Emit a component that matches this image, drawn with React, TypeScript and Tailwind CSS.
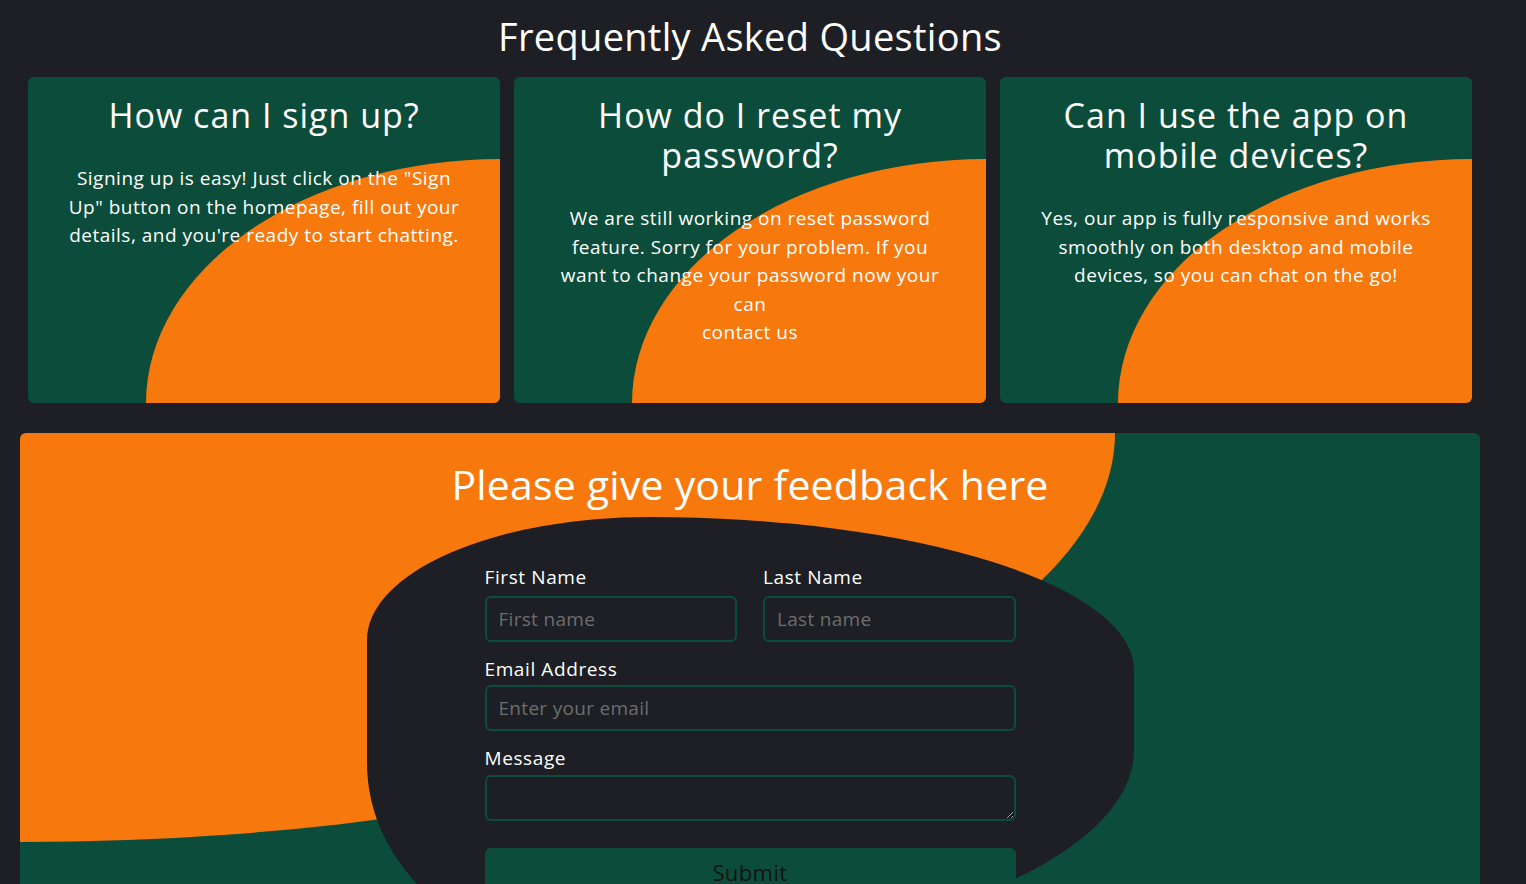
import React from "react";

const faqs = [
  {
    q: "How can I sign up?",
    a: (
      <>
        Signing up is easy! Just click on the "Sign Up" button on the homepage, fill out your details, and
        you're ready to start chatting.
      </>
    ),
  },
  {
    q: "How do I reset my password?",
    a: (
      <>
        We are still working on reset password feature. Sorry for your problem. If you want to change your
        password now your can
        <br />
        contact us
      </>
    ),
  },
  {
    q: "Can I use the app on mobile devices?",
    a: (
      <>
        Yes, our app is fully responsive and works smoothly on both desktop and mobile devices, so you can
        chat on the go!
      </>
    ),
  },
];

function FaqCard({ q, a }: { q: string; a: React.ReactNode }) {
  return (
    <div className="relative h-[326px] overflow-hidden rounded-md bg-[#0b4d3a] px-[36px] pt-[18px] text-center text-white">
      <div className="absolute bottom-0 right-0 h-[244px] w-[354px] rounded-tl-[100%] bg-[#f7780c]" />
      <h3 className="relative text-[34px] font-medium leading-[40px] tracking-[1px]">{q}</h3>
      <p className="relative mt-[29px] text-[19px] leading-[28.5px] tracking-[0.5px]">{a}</p>
    </div>
  );
}

function Label({ children, gap = "mb-[5px]" }: { children: React.ReactNode; gap?: string }) {
  return (
    <label className={`${gap} block text-[19px] font-medium leading-[27px] tracking-[0.6px] text-white`}>
      {children}
    </label>
  );
}

const inputCls =
  "block h-[46px] w-full rounded-md border-2 border-[#0b4d3a] bg-transparent px-[12px] text-[19px] tracking-[0.3px] text-white placeholder:text-[#6d6d6d] outline-none";

export default function App() {
  return (
    <div className="min-h-screen bg-[#1d1f24] font-['Open_Sans',sans-serif]">
      <div className="w-[1500px] pb-[40px]">
        <h1 className="pt-[9px] text-center text-[38px] font-medium leading-[54px] tracking-[0.3px] text-white">
          Frequently Asked Questions
        </h1>

        <div className="mt-[14px] grid grid-cols-3 gap-[14px] px-[28px]">
          {faqs.map((f) => (
            <FaqCard key={f.q} q={f.q} a={f.a} />
          ))}
        </div>

        <section className="relative mx-[20px] mt-[30px] overflow-hidden rounded-t-md bg-[#0b4d3a] pb-[60px]">
          <div className="absolute left-0 top-0 h-[409px] w-[1095px] rounded-br-[100%] bg-[#f7780c]" />
          <h2 className="relative pt-[21px] text-center text-[41px] font-medium leading-[60px] tracking-[0.2px] text-white">
            Please give your feedback here
          </h2>

          <form className="relative mx-auto mt-[3px] w-[767px] rounded-[283px_484px_540px_227px/123px_153px_206px_193px] bg-[#1d1f24] px-[118px] pb-[60px] pt-[47px]">
            <div className="grid grid-cols-2 gap-x-[26px]">
              <div>
                <Label>First Name</Label>
                <input type="text" placeholder="First name" className={inputCls} />
              </div>
              <div>
                <Label>Last Name</Label>
                <input type="text" placeholder="Last name" className={inputCls} />
              </div>
            </div>
            <div className="mt-[14px]">
              <Label gap="mb-[2px]">Email Address</Label>
              <input type="email" placeholder="Enter your email" className={inputCls} />
            </div>
            <div className="mt-[14px]">
              <Label gap="mb-[3px]">Message</Label>
              <textarea className="block h-[46px] w-full rounded-md border-2 border-[#0b4d3a] bg-transparent px-[12px] py-[8px] text-[19px] text-white outline-none" />
            </div>
            <button
              type="button"
              className="mt-[27px] block h-[48px] w-full rounded-md bg-[#0b4d3a] text-[22px] leading-[48px] tracking-[0.4px] text-[#111315]"
            >
              Submit
            </button>
          </form>
        </section>
      </div>
    </div>
  );
}
